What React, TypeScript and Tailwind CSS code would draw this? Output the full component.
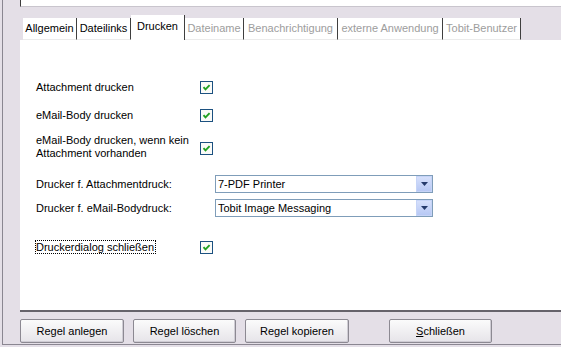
import React from "react";

const tabs = [
  { label: "Allgemein", w: "w-[54px]", state: "normal" },
  { label: "Dateilinks", w: "w-[54px]", state: "normal" },
  { label: "Drucken", w: "w-[54px]", state: "active" },
  { label: "Dateiname", w: "w-[59px]", state: "disabled" },
  { label: "Benachrichtigung", w: "w-[94px]", state: "disabled" },
  { label: "externe Anwendung", w: "w-[105px]", state: "disabled" },
  { label: "Tobit-Benutzer", w: "w-[78px]", state: "disabled" },
];

function CheckBox() {
  return (
    <svg width="13" height="13" viewBox="0 0 13 13" className="shrink-0">
      <rect x="0.5" y="0.5" width="12" height="12" fill="#fbfbf8" stroke="#1c5180" />
      <path d="M3.5 6.2 L5.5 8.4 L9.6 4.2" fill="none" stroke="#21a121" strokeWidth="1.9" />
    </svg>
  );
}

function Select({ value }: { value: string }) {
  return (
    <div className="ml-[15px] w-[218px] h-[18px] flex border border-[#7f9db9] bg-white">
      <div className="flex-1 pl-[2px] leading-[16px]">{value}</div>
      <div className="w-[16px] h-full bg-gradient-to-b from-[#d6e0fb] to-[#b7c8f4] border border-[#c6d4f7] flex items-center justify-center">
        <svg width="7" height="4" viewBox="0 0 7 4">
          <path d="M0 0 H7 L3.5 4 Z" fill="#243a6b" />
        </svg>
      </div>
    </div>
  );
}

function Button({ w, children }: { w: string; children: React.ReactNode }) {
  return (
    <button
      className={`${w} h-[24px] rounded-[2px] border border-[#8c8992] bg-gradient-to-b from-[#fbfbfb] to-[#e6e4e9] shadow-[inset_-1px_-1px_0_#cfccd4] text-[11px] text-black`}
    >
      {children}
    </button>
  );
}

export default function App() {
  return (
    <div className="w-[561px] h-[347px] bg-[#e4dfe7] pl-[2px] overflow-hidden font-['Liberation_Sans',Arial,sans-serif] text-[11px] text-black">
      <div className="h-[345px] border-l border-b border-[#8a8691] flex flex-col">
        {/* top field, cut off */}
        <div className="ml-[17px] h-[7px] bg-white border-l border-l-[#3c3c3c] border-b border-b-[#c9c5cd]" />

        {/* tab strip */}
        <div className="ml-[20px] mt-[8px] h-[25px] flex items-end">
          {tabs.map((t) =>
            t.state === "active" ? (
              <div
                key={t.label}
                className={`${t.w} h-[25px] bg-white border-r border-r-[#3f3f3f] flex items-center justify-center pb-[3px]`}
              >
                {t.label}
              </div>
            ) : (
              <div
                key={t.label}
                className={`${t.w} h-[22px] bg-white border-r border-r-[#3f3f3f] border-b border-b-[#ebebeb] flex items-center justify-center ${
                  t.state === "disabled" ? "text-[#9d9d9d]" : "text-black"
                }`}
              >
                {t.label}
              </div>
            )
          )}
        </div>

        {/* tab panel */}
        <div className="ml-[17px] h-[272px] bg-white border-b-2 border-b-[#66636b] flex flex-col pl-[16px]">
          <div className="mt-[41px] h-[13px] flex items-center">
            <span className="w-[164px] shrink-0">Attachment drucken</span>
            <CheckBox />
          </div>
          <div className="mt-[15px] h-[13px] flex items-center">
            <span className="w-[164px] shrink-0">eMail-Body drucken</span>
            <CheckBox />
          </div>
          <div className="mt-[12px] flex items-start">
            <span className="w-[164px] shrink-0 leading-[13px]">
              eMail-Body drucken, wenn kein
              <br />
              Attachment vorhanden
            </span>
            <div className="mt-[8px]">
              <CheckBox />
            </div>
          </div>
          <div className="mt-[15px] flex items-center">
            <span className="w-[164px] shrink-0">Drucker f. Attachmentdruck:</span>
            <Select value="7-PDF Printer" />
          </div>
          <div className="mt-[6px] flex items-center">
            <span className="w-[164px] shrink-0">Drucker f. eMail-Bodydruck:</span>
            <Select value="Tobit Image Messaging" />
          </div>
          <div className="mt-[23px] h-[14px] flex items-center">
            <div className="w-[164px] shrink-0">
              <span className="-ml-[1px] inline-block border border-dotted border-black leading-[12px] pr-[1px]">
                Druckerdialog schließen
              </span>
            </div>
            <CheckBox />
          </div>
        </div>

        {/* button bar */}
        <div className="pl-[17px] pt-[7px] flex">
          <Button w="w-[104px]">Regel anlegen</Button>
          <div className="w-[9px]" />
          <Button w="w-[103px]">Regel löschen</Button>
          <div className="w-[9px]" />
          <Button w="w-[104px]">Regel kopieren</Button>
          <div className="w-[40px]" />
          <Button w="w-[103px]">
            <span className="underline">S</span>chließen
          </Button>
        </div>
      </div>
    </div>
  );
}
